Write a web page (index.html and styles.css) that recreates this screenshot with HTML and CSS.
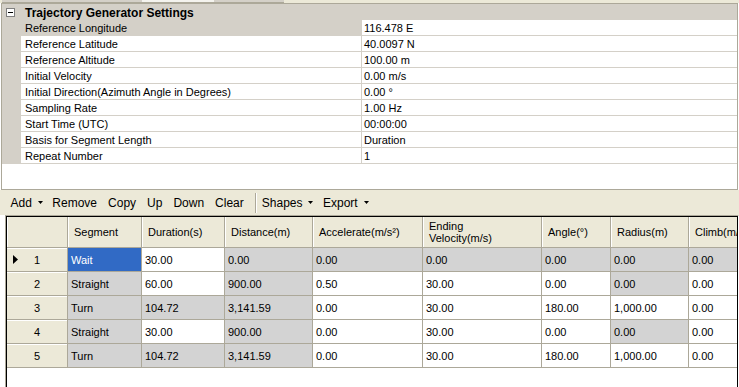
FILE: index.html
```html
<!DOCTYPE html>
<html lang="en">
<head>
    <meta charset="UTF-8">
    <meta name="viewport" content="width=device-width, initial-scale=1.0">
    <title>Trajectory Generator</title>
    <link rel="stylesheet" href="styles.css">
</head>
<body>
    <div class="tabs">
        <span class="tab tab-edge"></span>
        <span class="tab"></span>
        <span class="tab"></span>
        <span class="tab tab-light"></span>
        <span class="tab"></span>
    </div>

    <div class="props">
        <div class="category">
            <span class="toggle">
                <svg width="9" height="9" viewBox="0 0 9 9"><rect x="0.5" y="0.5" width="8" height="8" fill="#fff" stroke="#7f7f7f"/><line x1="2" y1="4.5" x2="7" y2="4.5" stroke="#000"/></svg>
            </span>
            <span class="category-title">Trajectory Generator Settings</span>
        </div>
        <div class="prop selected"><span class="gutter"></span><span class="name">Reference Longitude</span><span class="value">116.478 E</span></div>
        <div class="prop"><span class="gutter"></span><span class="name">Reference Latitude</span><span class="value">40.0097 N</span></div>
        <div class="prop"><span class="gutter"></span><span class="name">Reference Altitude</span><span class="value">100.00 m</span></div>
        <div class="prop"><span class="gutter"></span><span class="name">Initial Velocity</span><span class="value">0.00 m/s</span></div>
        <div class="prop"><span class="gutter"></span><span class="name">Initial Direction(Azimuth Angle in Degrees)</span><span class="value">0.00 °</span></div>
        <div class="prop"><span class="gutter"></span><span class="name">Sampling Rate</span><span class="value">1.00 Hz</span></div>
        <div class="prop"><span class="gutter"></span><span class="name">Start Time (UTC)</span><span class="value">00:00:00</span></div>
        <div class="prop"><span class="gutter"></span><span class="name">Basis for Segment Length</span><span class="value">Duration</span></div>
        <div class="prop"><span class="gutter"></span><span class="name">Repeat Number</span><span class="value">1</span></div>
    </div>

    <div class="toolbar">
        <span class="tool drop">Add<svg class="drop-arrow" width="5" height="3" viewBox="0 0 5 3"><polygon points="0,0 5,0 2.5,3" fill="#000"/></svg></span>
        <span class="tool">Remove</span>
        <span class="tool">Copy</span>
        <span class="tool">Up</span>
        <span class="tool">Down</span>
        <span class="tool">Clear</span>
        <span class="tool-sep"></span>
        <span class="tool drop">Shapes<svg class="drop-arrow" width="5" height="3" viewBox="0 0 5 3"><polygon points="0,0 5,0 2.5,3" fill="#000"/></svg></span>
        <span class="tool drop">Export<svg class="drop-arrow" width="5" height="3" viewBox="0 0 5 3"><polygon points="0,0 5,0 2.5,3" fill="#000"/></svg></span>
    </div>

    <div class="grid-frame">
        <div class="grid">
            <div class="grid-row header">
                <div class="hcell"></div>
                <div class="hcell">Segment</div>
                <div class="hcell">Duration(s)</div>
                <div class="hcell">Distance(m)</div>
                <div class="hcell">Accelerate(m/s²)</div>
                <div class="hcell">Ending<br>Velocity(m/s)</div>
                <div class="hcell">Angle(°)</div>
                <div class="hcell">Radius(m)</div>
                <div class="hcell">Climb(m/s)</div>
            </div>
            <div class="grid-row">
                <div class="rowhead current">
                    <svg class="row-arrow" width="5" height="9" viewBox="0 0 5 9"><polygon points="0,0 5,4.5 0,9" fill="#000"/></svg>1
                </div>
                <div class="cell sel">Wait</div>
                <div class="cell">30.00</div>
                <div class="cell ro">0.00</div>
                <div class="cell ro">0.00</div>
                <div class="cell ro">0.00</div>
                <div class="cell ro">0.00</div>
                <div class="cell ro">0.00</div>
                <div class="cell ro">0.00</div>
            </div>
            <div class="grid-row">
                <div class="rowhead">2</div>
                <div class="cell ro">Straight</div>
                <div class="cell">60.00</div>
                <div class="cell ro">900.00</div>
                <div class="cell">0.50</div>
                <div class="cell">30.00</div>
                <div class="cell">0.00</div>
                <div class="cell ro">0.00</div>
                <div class="cell">0.00</div>
            </div>
            <div class="grid-row">
                <div class="rowhead">3</div>
                <div class="cell ro">Turn</div>
                <div class="cell ro">104.72</div>
                <div class="cell ro">3,141.59</div>
                <div class="cell">0.00</div>
                <div class="cell">30.00</div>
                <div class="cell">180.00</div>
                <div class="cell">1,000.00</div>
                <div class="cell">0.00</div>
            </div>
            <div class="grid-row">
                <div class="rowhead">4</div>
                <div class="cell ro">Straight</div>
                <div class="cell">30.00</div>
                <div class="cell ro">900.00</div>
                <div class="cell">0.00</div>
                <div class="cell">30.00</div>
                <div class="cell">0.00</div>
                <div class="cell ro">0.00</div>
                <div class="cell">0.00</div>
            </div>
            <div class="grid-row">
                <div class="rowhead">5</div>
                <div class="cell ro">Turn</div>
                <div class="cell ro">104.72</div>
                <div class="cell ro">3,141.59</div>
                <div class="cell">0.00</div>
                <div class="cell">30.00</div>
                <div class="cell">180.00</div>
                <div class="cell">1,000.00</div>
                <div class="cell">0.00</div>
            </div>
        </div>
    </div>
</body>
</html>
```

FILE: styles.css
```css
body {
    margin: 0;
    width: 739px;
    height: 387px;
    overflow: hidden;
    font-family: "Liberation Sans", Arial, sans-serif;
    font-size: 11px;
    color: #000;
    background-color: #fff;
}

/* strip of tab bottoms at the very top */
.tabs {
    display: flex;
    height: 3px;
    background-color: #ece9d8;
}
.tab {
    width: 70px;
    box-sizing: border-box;
    background-color: #d4d0c8;
    border-bottom: 1px solid #aca899;
}
.tab-edge {
    width: 2px;
    background-color: #ece9d8;
    border: none;
}
.tab-light {
    width: 72px;
    background-color: #f4f3ee;
}

/* property grid */
.props {
    margin: 0 1px;
    height: 187px;
    box-sizing: border-box;
    border: 1px solid #aca899;
    background-color: #fff;
}
.category {
    display: flex;
    align-items: center;
    height: 16px;
    padding-top: 1px;
    box-sizing: border-box;
    background-color: #d4d0c8;
}
.toggle {
    display: flex;
    margin: 0 10px 0 4px;
}
.category-title {
    font-size: 12px;
    font-weight: bold;
}
.prop {
    display: grid;
    grid-template-columns: 19px 341px 1fr;
    height: 16px;
}
.gutter {
    background-color: #d4d0c8;
}
.name,
.value {
    padding-top: 2px;
    line-height: 13px;
    border-bottom: 1px solid #d4d0c8;
    white-space: nowrap;
}
.name {
    padding-left: 4px;
    border-right: 1px solid #d4d0c8;
}
.value {
    padding-left: 2px;
}
.prop.selected .name {
    background-color: #d4d0c8;
}

/* toolbar */
.toolbar {
    display: flex;
    align-items: center;
    height: 25px;
    padding-left: 5px;
    background-color: #ece9d8;
    font-size: 12px;
}
.tool {
    display: flex;
    align-items: center;
    padding: 0 5.5px;
}
.tool.drop {
    padding-right: 4px;
}
.drop-arrow {
    margin-left: 6px;
}
.tool-sep {
    width: 1px;
    height: 20px;
    background-color: #aca899;
    border-right: 1px solid #fff;
    margin: 0 -1px 0 6px;
}

/* data grid */
.grid-frame {
    margin-left: 5px;
    height: 172px;
    box-sizing: border-box;
    border-top: 1px solid #aca899;
    border-left: 1px solid #aca899;
    border-right: 1px solid #fff;
}
.grid {
    height: 100%;
    box-sizing: border-box;
    overflow: hidden;
    border-top: 1px solid #000;
    border-left: 1px solid #000;
    border-right: 1px solid #000;
    background-color: #fff;
}
.grid-row {
    display: grid;
    grid-template-columns: 61px 74px 83px 88px 110px 119px 69px 78px 80px;
    height: 24px;
}
.grid-row.header {
    height: 31px;
}
.hcell {
    display: flex;
    align-items: center;
    padding-left: 6px;
    line-height: 12px;
    white-space: nowrap;
    background-color: #ece9d8;
    border-right: 1px solid #aca899;
    border-bottom: 1px solid #aca899;
    box-shadow: inset 1px 0 #fff;
}
.rowhead {
    position: relative;
    display: flex;
    align-items: center;
    justify-content: center;
    background-color: #ece9d8;
    border-right: 1px solid #aca899;
    border-bottom: 1px solid #aca899;
    box-shadow: inset 0 1px #fff;
}
.row-arrow {
    position: absolute;
    left: 6px;
    top: 7px;
}
.cell {
    display: flex;
    align-items: center;
    padding-left: 3px;
    white-space: nowrap;
    background-color: #fff;
    border-right: 1px solid #aca899;
    border-bottom: 1px solid #aca899;
}
.cell.ro {
    background-color: #d3d3d3;
}
.cell.sel {
    background-color: #316ac5;
    color: #fff;
}
```
